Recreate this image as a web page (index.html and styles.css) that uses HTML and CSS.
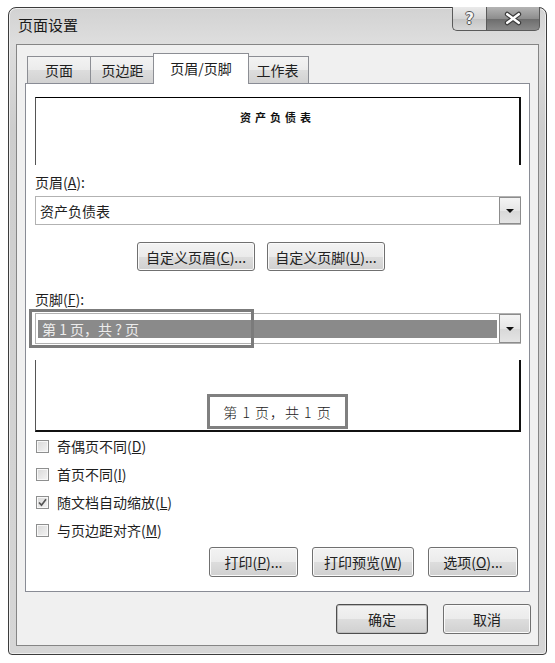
FILE: index.html
```html
<!DOCTYPE html>
<html lang="zh-CN">
<head>
  <meta charset="UTF-8" />
  <title>页面设置</title>
  <link rel="stylesheet" href="styles.css">
</head>
<body>

  <div class="window">
    <div class="titlebar">
      <span class="title">页面设置</span>
      <div class="caption-btns">
        <div class="cap help">?</div>
        <div class="cap close">
          <svg width="54" height="23" viewBox="0 0 54 23">
            <path d="M21 7 L33 16 M33 7 L21 16" stroke="#3a3a3a" stroke-width="5" stroke-linecap="round"/>
            <path d="M21 7 L33 16 M33 7 L21 16" stroke="#ffffff" stroke-width="2.6" stroke-linecap="round"/>
          </svg>
        </div>
      </div>
    </div>

    <div class="client">
      <div class="tabs">
        <div class="tab tab-page">页面</div>
        <div class="tab tab-margin">页边距</div>
        <div class="tab active">页眉/页脚</div>
        <div class="tab tab-sheet">工作表</div>
      </div>

      <div class="panel">
        <!-- header preview -->
        <div class="preview preview-head">
          <span class="head-text">资产负债表</span>
        </div>

        <div class="label">页眉(<u>A</u>):</div>
        <div class="combo">
          <span class="combo-text">资产负债表</span>
          <span class="combo-arrow"><i class="tri"></i></span>
        </div>

        <div class="custom-row">
          <button class="btn btn-custom">自定义页眉(<u>C</u>)...</button>
          <button class="btn btn-custom">自定义页脚(<u>U</u>)...</button>
        </div>

        <div class="label label-foot">页脚(<u>F</u>):</div>
        <div class="combo combo-foot">
          <span class="combo-sel">第 1 页，共 ? 页</span>
          <span class="combo-arrow"><i class="tri"></i></span>
          <div class="mark mark-combo"></div>
        </div>

        <!-- footer preview -->
        <div class="preview preview-foot">
          <span class="foot-text">第 1 页，共 1 页</span>
        </div>

        <ul class="checks">
          <li><span class="box"></span>奇偶页不同(<u>D</u>)</li>
          <li><span class="box"></span>首页不同(<u>I</u>)</li>
          <li>
            <span class="box">
              <svg width="11" height="11" viewBox="0 0 11 11">
                <path d="M2 5.5 L4.5 8.2 L9 2.2" fill="none" stroke="#555" stroke-width="1.7"/>
              </svg>
            </span>随文档自动缩放(<u>L</u>)
          </li>
          <li><span class="box"></span>与页边距对齐(<u>M</u>)</li>
        </ul>

        <div class="btn-row">
          <button class="btn btn-print">打印(<u>P</u>)...</button>
          <button class="btn btn-preview">打印预览(<u>W</u>)</button>
          <button class="btn btn-options">选项(<u>O</u>)...</button>
        </div>
      </div>

      <div class="dialog-btns">
        <button class="btn btn-ok">确定</button>
        <button class="btn btn-cancel">取消</button>
      </div>
    </div>
  </div>

</body>
</html>
```

FILE: styles.css
```css
body {
  margin: 0;
  background: #ffffff;
  font-family: "Noto Sans CJK SC", "Noto Sans", sans-serif;
  font-size: 14px;
  color: #1e1e1e;
}

.window {
  box-sizing: border-box;
  width: 539px;
  height: 648px;
  margin: 7px 0 0 8px;
  border: 1px solid #3c3c3c;
  border-radius: 8px 8px 4px 4px;
  background: linear-gradient(#d2d2d2, #dedede 36px, #cdcdcd 120px, #d6d6d6);
  box-shadow: inset 0 0 0 1px #eeeeee;
  padding: 0 7px 8px 7px;
  display: flex;
  flex-direction: column;
}

/* title bar */
.titlebar {
  height: 36px;
  display: flex;
  justify-content: space-between;
  align-items: flex-start;
}

.title {
  font-size: 15px;
  padding: 6px 0 0 2px;
  color: #1a1a1a;
}

.caption-btns {
  display: flex;
  margin: -1px -1px 0 0;
}

.cap {
  box-sizing: border-box;
  height: 24px;
  border: 1px solid #5a5a5a;
  border-top: none;
  display: flex;
  align-items: center;
  justify-content: center;
}

.help {
  width: 34px;
  border-right: none;
  border-radius: 0 0 0 5px;
  background: linear-gradient(#eaeaea, #d4d4d4 50%, #c4c4c4 51%, #d8d8d8);
  font-weight: bold;
  font-size: 15px;
  font-family: "DejaVu Sans", sans-serif;
  color: #f6f6f6;
  text-shadow: -1px 0 #555, 1px 0 #555, 0 -1px #555, 0 1px #555;
}

.close {
  width: 54px;
  border-radius: 0 0 5px 0;
  background: linear-gradient(#b4b4b4, #8e8e8e 50%, #6c6c6c 51%, #8a8a8a);
}

/* client area */
.client {
  flex: 1;
  background: #f0f0f0;
  border: 1px solid #858585;
  padding: 8px 8px 0 8px;
  display: flex;
  flex-direction: column;
}

.tabs {
  height: 30px;
  display: flex;
  align-items: flex-end;
  padding-left: 3px;
}

.tab {
  box-sizing: border-box;
  height: 27px;
  border: 1px solid #8c8e94;
  border-bottom: none;
  background: linear-gradient(#f3f3f3, #ebebeb 50%, #dddddd 51%, #d2d2d2);
  display: flex;
  align-items: center;
  justify-content: center;
  margin-left: -1px;
}

.tab-page { width: 64px; }
.tab-margin { width: 65px; }
.tab-sheet { width: 63px; }

.tab.active {
  width: 96px;
  height: 31px;
  margin: 0 -2px -1px -2px;
  background: #ffffff;
  position: relative;
  z-index: 1;
  padding-bottom: 3px;
}

.panel {
  background: #ffffff;
  border: 1px solid #898c95;
  padding: 13px 8px 14px 9px;
  display: flex;
  flex-direction: column;
}

/* previews */
.preview {
  box-sizing: border-box;
  height: 68px;
  display: flex;
  justify-content: center;
}

.preview-head {
  border-top: 1px solid #000;
  border-left: 1px solid #555;
  border-right: 2px solid #111;
  padding-top: 11px;
}

.head-text {
  font-size: 11px;
  font-weight: bold;
  letter-spacing: 4px;
  line-height: 16px;
  color: #111;
}

.label {
  margin-top: 9px;
  line-height: 16px;
}

.label-foot {
  margin-top: 20px;
}

.combo {
  position: relative;
  box-sizing: border-box;
  height: 29px;
  margin-top: 6px;
  border: 1px solid #b2b2b2;
  display: flex;
  align-items: center;
}

.combo-text {
  padding-left: 4px;
}

.combo-arrow {
  box-sizing: border-box;
  margin-left: auto;
  width: 22px;
  height: 100%;
  border: 1px solid #8c8c8c;
  margin-right: -1px;
  background: linear-gradient(#f4f4f4, #e6e6e6 50%, #d8d8d8 51%, #e4e4e4);
  display: flex;
  align-items: center;
  justify-content: center;
}

.tri {
  width: 0;
  height: 0;
  border-left: 4px solid transparent;
  border-right: 4px solid transparent;
  border-top: 4px solid #111;
}

.combo-foot {
  height: 31px;
}

.combo-sel {
  flex: 1;
  margin: 0 2px 0 2px;
  height: 18px;
  line-height: 18px;
  padding-left: 4px;
  background: #8a8a8a;
  color: #ececec;
}

.mark {
  position: absolute;
  box-sizing: border-box;
  border: 3px solid #7b7b7b;
}

.mark-combo {
  left: -7px;
  top: -5px;
  width: 225px;
  height: 39px;
}

.custom-row {
  display: flex;
  gap: 12px;
  margin-top: 17px;
  padding-left: 102px;
}

.preview-foot {
  height: 72px;
  margin-top: 16px;
  border-left: 1px solid #555;
  border-right: 2px solid #111;
  border-bottom: 2px solid #111;
  align-items: flex-end;
}

.foot-text {
  box-sizing: border-box;
  height: 35px;
  margin-bottom: 1px;
  padding: 0 13px;
  border: 3px solid #808080;
  line-height: 30px;
  font-weight: 300;
  letter-spacing: 1px;
  color: #222;
}

/* checkboxes */
.checks {
  list-style: none;
  margin: 0;
  padding: 0;
}

.checks li {
  height: 28px;
  display: flex;
  align-items: center;
}

.box {
  box-sizing: border-box;
  width: 13px;
  height: 13px;
  margin: 0 8px 0 1px;
  border: 1px solid #8e8f8f;
  background: linear-gradient(135deg, #d8d8d8, #f4f4f4);
  box-shadow: inset 0 0 0 1px #f8f8f8;
  display: flex;
  align-items: center;
  justify-content: center;
}

/* buttons */
.btn {
  box-sizing: border-box;
  height: 30px;
  padding: 0;
  border: 1px solid #707070;
  border-radius: 3px;
  background: linear-gradient(#f3f3f3, #ebebeb 50%, #dddddd 51%, #d0d0d0);
  box-shadow: inset 0 0 0 1px #fafafa;
  font: inherit;
  color: #222;
}

.btn-custom { width: 118px; height: 29px; }

.btn-row {
  display: flex;
  justify-content: flex-end;
  gap: 14px;
  margin-top: 3px;
  padding-right: 3px;
}

.btn-print { width: 89px; }
.btn-preview { width: 102px; }
.btn-options { width: 90px; }

.dialog-btns {
  display: flex;
  justify-content: flex-end;
  gap: 15px;
  margin: 12px -1px 0 0;
}

.btn-ok {
  width: 92px;
  border-color: #4e4e4e;
  box-shadow: inset 0 0 0 1px #bdbdbd;
}

.btn-cancel { width: 88px; }
```
